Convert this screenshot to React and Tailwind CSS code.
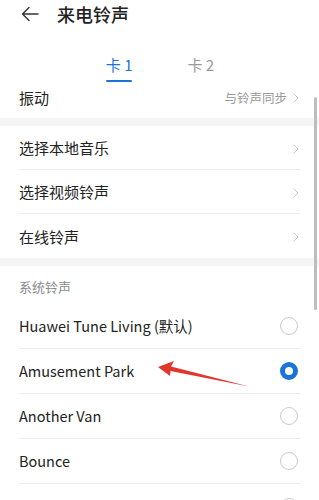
import { ChevronRight } from 'lucide-react';

const font = { fontFamily: '"Noto Sans CJK SC", "Noto Sans", sans-serif' };

function NavRow({ label }) {
  return (
    <div className="h-[44px] mx-[19px] flex items-center justify-between border-b border-[#ececec] last:border-b-0 pt-[2px]">
      <span className="text-[15px] text-[#222]">{label}</span>
      <ChevronRight size={16} strokeWidth={1.4} className="text-[#c4c4c4] -mr-[4px]" />
    </div>
  );
}

function Radio({ checked }) {
  if (checked) {
    return <span className="w-[18px] h-[18px] rounded-full border-[5px] border-[#1a73d9] bg-white" />;
  }
  return <span className="w-[18px] h-[18px] rounded-full border border-[#c9c9c9] bg-white" />;
}

function ToneRow({ label, checked, last }) {
  return (
    <div className={`h-[45px] mx-[19px] flex items-center justify-between ${last ? '' : 'border-b border-[#ececec]'}`}>
      <span className="text-[14.5px] text-[#222]">{label}</span>
      <span className="mr-[2px] flex"><Radio checked={checked} /></span>
    </div>
  );
}

export default function App() {
  return (
    <div className="relative w-[319px] h-[500px] overflow-hidden bg-white" style={font}>
      {/* header */}
      <div className="h-[30px] flex items-center pl-[21px] pb-[2px]">
        <svg width="18" height="16" viewBox="0 0 18 16" fill="none" stroke="#333" strokeWidth="1.4" strokeLinecap="round" strokeLinejoin="round">
          <path d="M1.5 8H17M8 1.5L1.5 8L8 14.5" />
        </svg>
        <span className="ml-[18px] text-[18px] font-medium text-[#222] leading-none">来电铃声</span>
      </div>

      {/* tabs */}
      <div className="h-[54px] flex items-end justify-center gap-[55px] pb-[2px] pl-[1px]">
        <div className="flex flex-col items-center">
          <span className="text-[15px] text-[#1a73d9] leading-none">卡 1</span>
          <span className="mt-[8px] w-[26px] h-[2px] bg-[#1a73d9] rounded" />
        </div>
        <div className="flex flex-col items-center">
          <span className="text-[15px] text-[#999] leading-none">卡 2</span>
          <span className="mt-[8px] w-[26px] h-[2px]" />
        </div>
      </div>

      {/* vibration */}
      <div className="h-[34px] px-[19px] flex items-center justify-between pb-[6px]">
        <span className="text-[15px] text-[#222]">振动</span>
        <span className="flex items-center text-[12.5px] text-[#999]">
          与铃声同步
          <ChevronRight size={16} strokeWidth={1.4} className="text-[#c4c4c4] ml-[1px] -mr-[4px]" />
        </span>
      </div>

      <div className="h-[8px] bg-[#f5f5f5]" />

      <div className="flex flex-col">
        <NavRow label="选择本地音乐" />
        <NavRow label="选择视频铃声" />
        <NavRow label="在线铃声" />
      </div>

      <div className="h-[8px] bg-[#f5f5f5]" />

      <div className="h-[38px] px-[19px] flex items-center pt-[4px]">
        <span className="text-[13px] text-[#8a8a8a]">系统铃声</span>
      </div>

      <div className="flex flex-col">
        <ToneRow label="Huawei Tune Living (默认)" />
        <ToneRow label="Amusement Park" checked />
        <ToneRow label="Another Van" />
        <ToneRow label="Bounce" />
        <div className="h-[45px] mx-[19px] flex items-center justify-end">
          <span className="mr-[2px] flex"><Radio /></span>
        </div>
      </div>

      {/* scrollbar */}
      <div className="absolute left-[314px] top-[97px] w-[3px] h-[213px] bg-[#bdbdbd] rounded" />

      {/* annotation arrow */}
      <svg className="absolute left-0 top-0" width="319" height="500" viewBox="0 0 319 500">
        <path d="M158 367 L174 361 L171 366.5 L249 386.5 L170.5 371 L170 376 Z" fill="#e2352c" />
      </svg>
    </div>
  );
}
